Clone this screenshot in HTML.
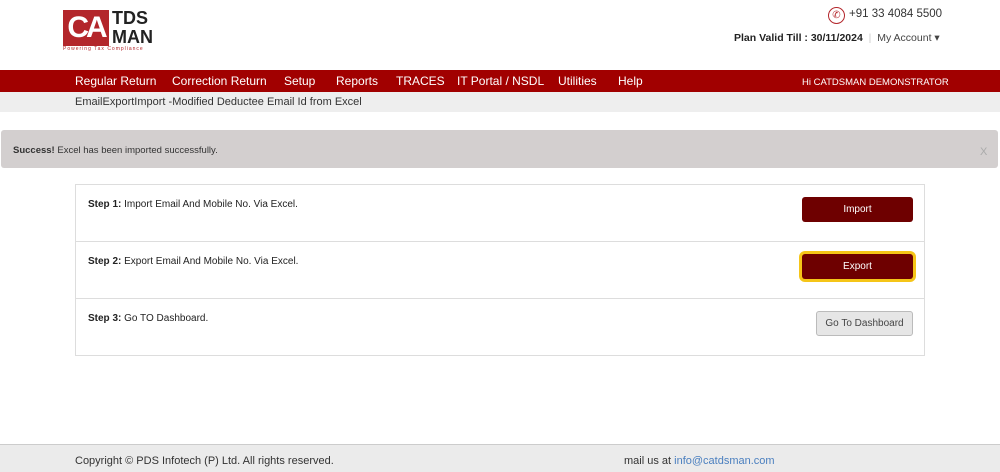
<!DOCTYPE html><html><head><style>
body{margin:0;width:1000px;height:471px;position:relative;background:#fff;font-family:"Liberation Sans",sans-serif;overflow:hidden;color:#222}
.a{position:absolute}
.nav span{position:absolute;top:74px;color:#fff;font-size:12px}
.row{position:absolute;left:75px;width:848px;border:1px solid #ddd;height:56px;background:#fff}
.row .t{position:absolute;left:12px;top:14px;font-size:10px}
.btn{position:absolute;right:11px;top:12px;width:111px;height:25px;background:#6e0000;color:#fff;font-size:10px;text-align:center;line-height:25px;border-radius:3px}
</style></head><body>
<div class="a" style="left:63px;top:10px;width:46px;height:36px;background:#b3262b;color:#fff;font-size:30px;font-weight:bold;line-height:36px;text-align:center;letter-spacing:-3px">CA</div>
<div class="a" style="left:112px;top:9px;font-size:18px;font-weight:bold;line-height:19px;color:#222">TDS<br>MAN</div>
<div class="a" style="left:63px;top:46px;font-size:5px;color:#b3262b;letter-spacing:1px">Powering Tax Compliance</div>
<div class="a" style="left:828px;top:7px;width:15px;height:15px;border:1px solid #b3262b;border-radius:50%;color:#b3262b;font-size:10px;text-align:center;line-height:15px">✆</div>
<div class="a" style="left:849px;top:8px;font-size:11.5px;color:#333">+91 33 4084 5500</div>
<div class="a" style="left:734px;top:32px;font-size:10.5px;color:#222"><b style="font-weight:600">Plan Valid Till : 30/11/2024</b> <span style="color:#ccc">&nbsp;|&nbsp;</span> <span style="color:#444">My Account ▾</span></div>
<div class="a" style="left:0;top:70px;width:1000px;height:22px;background:#a10000"></div>
<div class="nav"><span style="left:75px">Regular Return</span><span style="left:172px">Correction Return</span><span style="left:284px">Setup</span><span style="left:336px">Reports</span><span style="left:396px">TRACES</span><span style="left:457px">IT Portal / NSDL</span><span style="left:558px">Utilities</span><span style="left:618px">Help</span><span style="left:802px;font-size:9.5px;top:77px">Hi CATDSMAN DEMONSTRATOR</span></div>
<div class="a" style="left:0;top:92px;width:1000px;height:20px;background:#eee"></div>
<div class="a" style="left:75px;top:96px;font-size:11px;color:#333">EmailExportImport -Modified Deductee Email Id from Excel</div>
<div class="a" style="left:1px;top:130px;width:997px;height:38px;background:#d3cfcf;border-radius:3px"></div>
<div class="a" style="left:13px;top:145px;font-size:9.5px;color:#333"><b>Success!</b> Excel has been imported successfully.</div>
<div class="a" style="left:980px;top:146px;font-size:11px;color:#aaa">X</div>
<div class="row" style="top:184px"><div class="t"><b>Step 1:</b> Import Email And Mobile No. Via Excel.</div><div class="btn">Import</div></div>
<div class="row" style="top:241px"><div class="t"><b>Step 2:</b> Export Email And Mobile No. Via Excel.</div><div class="btn" style="box-shadow:0 0 0 3px #f5c518">Export</div></div>
<div class="row" style="top:298px"><div class="t"><b>Step 3:</b> Go TO Dashboard.</div><div class="btn" style="background:#e6e6e6;color:#444;border:1px solid #bbb;width:95px;height:23px;line-height:23px">Go To Dashboard</div></div>
<div class="a" style="left:0;top:444px;width:1000px;height:27px;background:#ebebeb;border-top:1px solid #ccc"></div>
<div class="a" style="left:75px;top:455px;font-size:11px;color:#333">Copyright © PDS Infotech (P) Ltd. All rights reserved.</div>
<div class="a" style="left:624px;top:455px;font-size:11px;color:#333">mail us at <span style="color:#4a7fbf">info@catdsman.com</span></div>
</body></html>
